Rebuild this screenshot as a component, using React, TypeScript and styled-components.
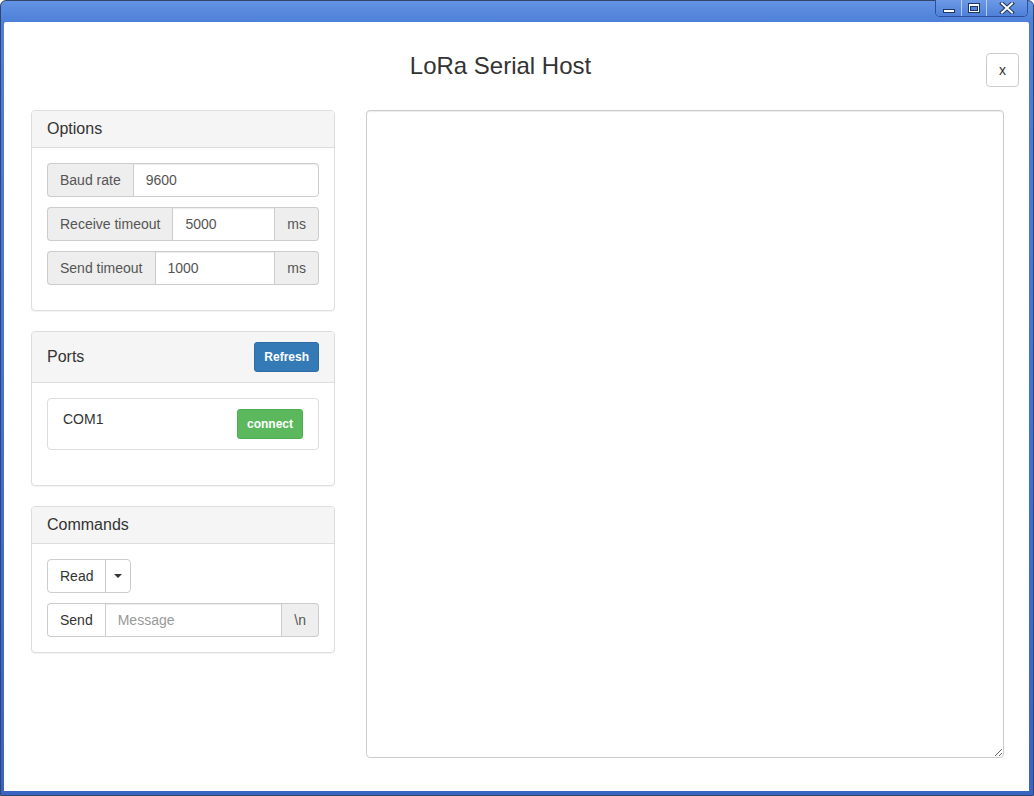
import React from "react";
import styled, { createGlobalStyle } from "styled-components";

const Global = createGlobalStyle`
  html, body { margin: 0; padding: 0; overflow: hidden; background: #fff; }
  * { box-sizing: border-box; }
  body { font-family: "Liberation Sans", Arial, Helvetica, sans-serif; font-size: 14px; line-height: 20px; color: #333; }
`;

const Window = styled.div`
  width: 1034px;
  height: 796px;
  display: flex;
  flex-direction: column;
  border: 1px solid #33456a;
  border-radius: 6px 6px 0 0;
  padding: 0 4px 4px 3px;
  background: linear-gradient(180deg, #6393e3 0px, #4d80d9 21px, #3f70cf 60%, #3864c2 100%);
`;

const TitleBar = styled.div`
  height: 21px;
  display: flex;
  justify-content: flex-end;
  align-items: flex-start;
  padding-right: 1px;
`;

const WinButtons = styled.div`
  display: flex;
  height: 17px;
  margin-top: -1px;
  border: 1px solid #2a4f9c;
  border-top: 0;
  border-radius: 0 0 5px 5px;
  overflow: hidden;
  box-shadow: inset 0 0 0 1px rgba(190, 210, 245, 0.75);
`;

const WinButton = styled.div<{ $w: number }>`
  width: ${(p) => p.$w}px;
  display: flex;
  align-items: center;
  justify-content: center;
  background: linear-gradient(180deg, #6d9ae6, #4e80d8);
  & + & {
    border-left: 1px solid rgba(200, 218, 248, 0.8);
  }
`;

const Client = styled.div`
  flex: 1;
  background: #fff;
  display: flex;
  flex-direction: column;
  padding: 31px 10px 33px 27px;
  border-radius: 2px 2px 0 0;
`;

const Header = styled.div`
  display: grid;
  grid-template-columns: 1fr auto;
  align-items: start;
`;

const Title = styled.h1`
  margin: 0;
  padding-right: 16px;
  text-align: center;
  font-size: 24px;
  line-height: 1.1;
  font-weight: 500;
  color: #333;
`;

const DefaultButton = styled.button`
  font-family: inherit;
  font-size: 14px;
  line-height: 20px;
  padding: 6px 12px;
  color: #333;
  background: #fff;
  border: 1px solid #ccc;
  border-radius: 4px;
  cursor: pointer;
`;

const Main = styled.div`
  flex: 1;
  margin-top: 23px;
  padding-right: 15px;
  display: grid;
  grid-template-columns: 304px 1fr;
  column-gap: 31px;
  min-height: 0;
`;

const Sidebar = styled.div`
  display: flex;
  flex-direction: column;
  align-items: stretch;
`;

const Panel = styled.section`
  border: 1px solid #ddd;
  border-radius: 4px;
  background: #fff;
  box-shadow: 0 1px 1px rgba(0, 0, 0, 0.05);
  margin-bottom: 20px;
`;

const PanelHeading = styled.div`
  display: flex;
  align-items: center;
  justify-content: space-between;
  padding: 10px 15px;
  background: #f5f5f5;
  border-bottom: 1px solid #ddd;
  border-radius: 3px 3px 0 0;
  color: #333;
`;

const PanelTitle = styled.h3`
  margin: 0;
  font-size: 16px;
  line-height: 16px;
  font-weight: 400;
`;

const PanelBody = styled.div`
  padding: 15px;
`;

const InputGroup = styled.div<{ $mb?: number }>`
  display: flex;
  height: 34px;
  margin-bottom: ${(p) => p.$mb ?? 0}px;
`;

const Addon = styled.span<{ $pos: "first" | "last" }>`
  display: flex;
  align-items: center;
  padding: 6px 12px;
  font-size: 14px;
  line-height: 20px;
  color: #555;
  background: #eee;
  border: 1px solid #ccc;
  white-space: nowrap;
  ${(p) =>
    p.$pos === "first"
      ? "border-right: 0; border-radius: 4px 0 0 4px;"
      : "border-left: 0; border-radius: 0 4px 4px 0;"}
`;

const Input = styled.input<{ $last?: boolean }>`
  flex: 1;
  min-width: 0;
  height: 34px;
  padding: 6px 12px;
  font-family: inherit;
  font-size: 14px;
  line-height: 20px;
  color: #555;
  background: #fff;
  border: 1px solid #ccc;
  border-radius: ${(p) => (p.$last ? "0 4px 4px 0" : "0")};
  box-shadow: inset 0 1px 1px rgba(0, 0, 0, 0.075);
  outline: none;
  &::placeholder {
    color: #999;
  }
`;

const GroupButton = styled(DefaultButton)`
  border-right: 0;
  border-radius: 4px 0 0 4px;
`;

const SmallButton = styled.button<{ $variant: "primary" | "success" }>`
  font-family: inherit;
  font-size: 12px;
  line-height: 18px;
  font-weight: 700;
  padding: 5px 9px;
  border-radius: 3px;
  color: #fff;
  cursor: pointer;
  background: ${(p) => (p.$variant === "primary" ? "#337ab7" : "#5cb85c")};
  border: 1px solid ${(p) => (p.$variant === "primary" ? "#2e6da4" : "#4cae4c")};
`;

const ListItem = styled.div`
  display: flex;
  justify-content: space-between;
  align-items: flex-start;
  padding: 10px 15px;
  border: 1px solid #ddd;
  border-radius: 4px;
  margin-bottom: 20px;
  color: #333;
`;

const BtnGroup = styled.div`
  display: inline-flex;
  margin-bottom: 10px;
  align-self: flex-start;
`;

const SplitMain = styled(DefaultButton)`
  border-radius: 4px 0 0 4px;
`;

const SplitCaret = styled(DefaultButton)`
  margin-left: -1px;
  padding: 6px 8px;
  border-radius: 0 4px 4px 0;
  display: flex;
  align-items: center;
`;

const Caret = styled.span`
  display: inline-block;
  width: 0;
  height: 0;
  border-top: 4px solid #333;
  border-left: 4px solid transparent;
  border-right: 4px solid transparent;
`;

const CommandsBody = styled(PanelBody)`
  display: flex;
  flex-direction: column;
`;

const Output = styled.textarea`
  width: 100%;
  height: 100%;
  margin: 0;
  padding: 6px 12px;
  font-family: inherit;
  font-size: 14px;
  color: #555;
  border: 1px solid #ccc;
  border-radius: 4px;
  box-shadow: inset 0 1px 1px rgba(0, 0, 0, 0.075);
  outline: none;
  resize: both;
`;

const MinIcon = () => (
  <svg width="14" height="12" viewBox="0 0 14 12">
    <rect x="1.5" y="7.5" width="11" height="3" fill="#fff" stroke="#1d3668" />
  </svg>
);

const MaxIcon = () => (
  <svg width="14" height="12" viewBox="0 0 14 12">
    <rect x="1.5" y="1.5" width="11" height="9" fill="#fff" stroke="#1d3668" />
    <rect x="3.5" y="4.5" width="7" height="4" fill="#5586dc" stroke="#1d3668" />
  </svg>
);

const CloseIcon = () => (
  <svg width="16" height="12" viewBox="0 0 16 12">
    <path d="M3 1.5 L13 10.5 M13 1.5 L3 10.5" stroke="#1d3668" strokeWidth="4" strokeLinecap="square" />
    <path d="M3 1.5 L13 10.5 M13 1.5 L3 10.5" stroke="#fff" strokeWidth="2" strokeLinecap="square" />
  </svg>
);

export default function App() {
  return (
    <>
      <Global />
      <Window>
        <TitleBar>
          <WinButtons>
            <WinButton $w={25}>
              <MinIcon />
            </WinButton>
            <WinButton $w={25}>
              <MaxIcon />
            </WinButton>
            <WinButton $w={41}>
              <CloseIcon />
            </WinButton>
          </WinButtons>
        </TitleBar>
        <Client>
          <Header>
            <Title>LoRa Serial Host</Title>
            <DefaultButton>x</DefaultButton>
          </Header>
          <Main>
            <Sidebar>
              <Panel>
                <PanelHeading>
                  <PanelTitle>Options</PanelTitle>
                </PanelHeading>
                <PanelBody>
                  <InputGroup $mb={10}>
                    <Addon $pos="first">Baud rate</Addon>
                    <Input $last defaultValue="9600" />
                  </InputGroup>
                  <InputGroup $mb={10}>
                    <Addon $pos="first">Receive timeout</Addon>
                    <Input defaultValue="5000" />
                    <Addon $pos="last">ms</Addon>
                  </InputGroup>
                  <InputGroup $mb={10}>
                    <Addon $pos="first">Send timeout</Addon>
                    <Input defaultValue="1000" />
                    <Addon $pos="last">ms</Addon>
                  </InputGroup>
                </PanelBody>
              </Panel>
              <Panel>
                <PanelHeading>
                  <PanelTitle>Ports</PanelTitle>
                  <SmallButton $variant="primary">Refresh</SmallButton>
                </PanelHeading>
                <PanelBody>
                  <ListItem>
                    <span>COM1</span>
                    <SmallButton $variant="success">connect</SmallButton>
                  </ListItem>
                </PanelBody>
              </Panel>
              <Panel>
                <PanelHeading>
                  <PanelTitle>Commands</PanelTitle>
                </PanelHeading>
                <CommandsBody>
                  <BtnGroup>
                    <SplitMain>Read</SplitMain>
                    <SplitCaret>
                      <Caret />
                    </SplitCaret>
                  </BtnGroup>
                  <InputGroup>
                    <GroupButton>Send</GroupButton>
                    <Input placeholder="Message" />
                    <Addon $pos="last">\n</Addon>
                  </InputGroup>
                </CommandsBody>
              </Panel>
            </Sidebar>
            <Output />
          </Main>
        </Client>
      </Window>
    </>
  );
}
